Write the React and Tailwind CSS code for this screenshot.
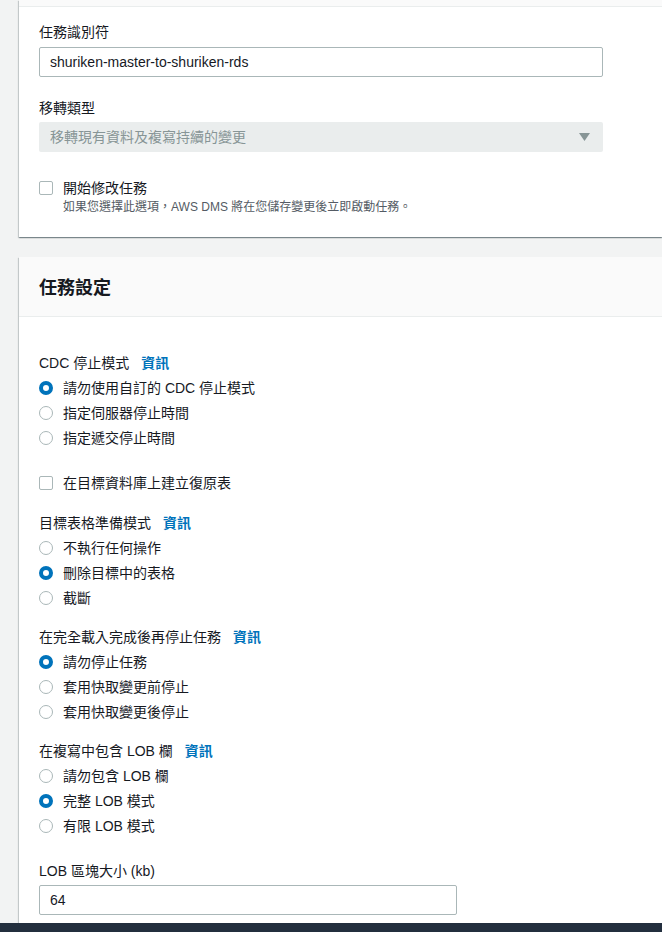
import React from 'react';

const Radio = ({ checked, label }) => (
  <label className="flex h-[25px] items-center gap-[10px]">
    <span
      className={
        checked
          ? 'h-[14px] w-[14px] shrink-0 rounded-full border-[4px] border-[#0073bb] bg-white'
          : 'h-[14px] w-[14px] shrink-0 rounded-full border border-[#aab7b8] bg-white'
      }
    />
    <span>{label}</span>
  </label>
);

const Checkbox = ({ label }) => (
  <label className="flex h-[20px] items-center gap-[10px]">
    <span className="h-[14px] w-[14px] shrink-0 rounded-[2px] border border-[#aab7b8] bg-white" />
    <span>{label}</span>
  </label>
);

const GroupLabel = ({ children }) => (
  <div className="flex h-[20px] items-center">
    <span>{children}</span>
    <a className="ml-[12px] font-bold text-[#0073bb]">資訊</a>
  </div>
);

const RadioGroup = ({ title, options, selected, className }) => (
  <div className={className}>
    <GroupLabel>{title}</GroupLabel>
    <div className="mt-[2px] flex flex-col">
      {options.map((o, i) => (
        <Radio key={o} label={o} checked={i === selected} />
      ))}
    </div>
  </div>
);

const panelShadow =
  'shadow-[0_1px_1px_0_rgba(0,28,36,0.3),1px_1px_1px_0_rgba(0,28,36,0.15),-1px_1px_1px_0_rgba(0,28,36,0.15)]';

export default function App() {
  return (
    <div className="flex h-[932px] w-[662px] flex-col overflow-hidden bg-[#f2f3f3] font-['Liberation_Sans','Noto_Sans_CJK_TC',sans-serif] text-[14px] leading-[20px] text-[#16191f]">
      <div className="min-h-0 flex-1 overflow-hidden pl-[19px]">
        {/* panel superior */}
        <div className={`bg-white ${panelShadow}`}>
          <div className="h-[7px] border-b border-[#eaeded] bg-[#fafafa]" />
          <div className="px-[20px] pt-[15px] pb-[22px]">
            <div className="h-[20px]">任務識別符</div>
            <div className="mt-[5px] flex h-[30px] w-[564px] items-center rounded-[2px] border border-[#aab7b8] bg-white pl-[10px]">
              shuriken-master-to-shuriken-rds
            </div>

            <div className="mt-[21px] h-[20px]">移轉類型</div>
            <div className="mt-[4px] flex h-[30px] w-[564px] items-center justify-between rounded-[2px] bg-[#eaeded] pl-[11px] pr-[13px] text-[#879596]">
              <span>移轉現有資料及複寫持續的變更</span>
              <svg width="11" height="8" viewBox="0 0 11 8">
                <path d="M0 0h11L5.5 8z" fill="#879596" />
              </svg>
            </div>

            <div className="mt-[26px]">
              <Checkbox label="開始修改任務" />
              <div className="mt-[1px] pl-[24px] text-[12px] leading-[16px] text-[#545b64]">
                如果您選擇此選項，AWS DMS 將在您儲存變更後立即啟動任務。
              </div>
            </div>
          </div>
        </div>

        {/* 任務設定 */}
        <div className={`mt-[20px] bg-white ${panelShadow}`}>
          <div className="flex h-[60px] items-center border-b border-[#eaeded] bg-[#fafafa] px-[20px] pt-[3px]">
            <h2 className="text-[18px] font-bold leading-[24px]">任務設定</h2>
          </div>

          <div className="px-[20px] pb-[20px]">
            <RadioGroup
              className="mt-[36px]"
              title="CDC 停止模式"
              selected={0}
              options={['請勿使用自訂的 CDC 停止模式', '指定伺服器停止時間', '指定遞交停止時間']}
            />

            <div className="mt-[23px]">
              <Checkbox label="在目標資料庫上建立復原表" />
            </div>

            <RadioGroup
              className="mt-[20px]"
              title="目標表格準備模式"
              selected={1}
              options={['不執行任何操作', '刪除目標中的表格', '截斷']}
            />

            <RadioGroup
              className="mt-[17px]"
              title="在完全載入完成後再停止任務"
              selected={0}
              options={['請勿停止任務', '套用快取變更前停止', '套用快取變更後停止']}
            />

            <RadioGroup
              className="mt-[17px]"
              title="在複寫中包含 LOB 欄"
              selected={1}
              options={['請勿包含 LOB 欄', '完整 LOB 模式', '有限 LOB 模式']}
            />

            <div className="mt-[23px] h-[20px]">LOB 區塊大小 (kb)</div>
            <div className="mt-[4px] flex h-[30px] w-[418px] items-center rounded-[2px] border border-[#aab7b8] bg-white pl-[10px]">
              64
            </div>
          </div>
        </div>
      </div>
      <div className="h-[9px] shrink-0 bg-[#232f3e]" />
    </div>
  );
}
